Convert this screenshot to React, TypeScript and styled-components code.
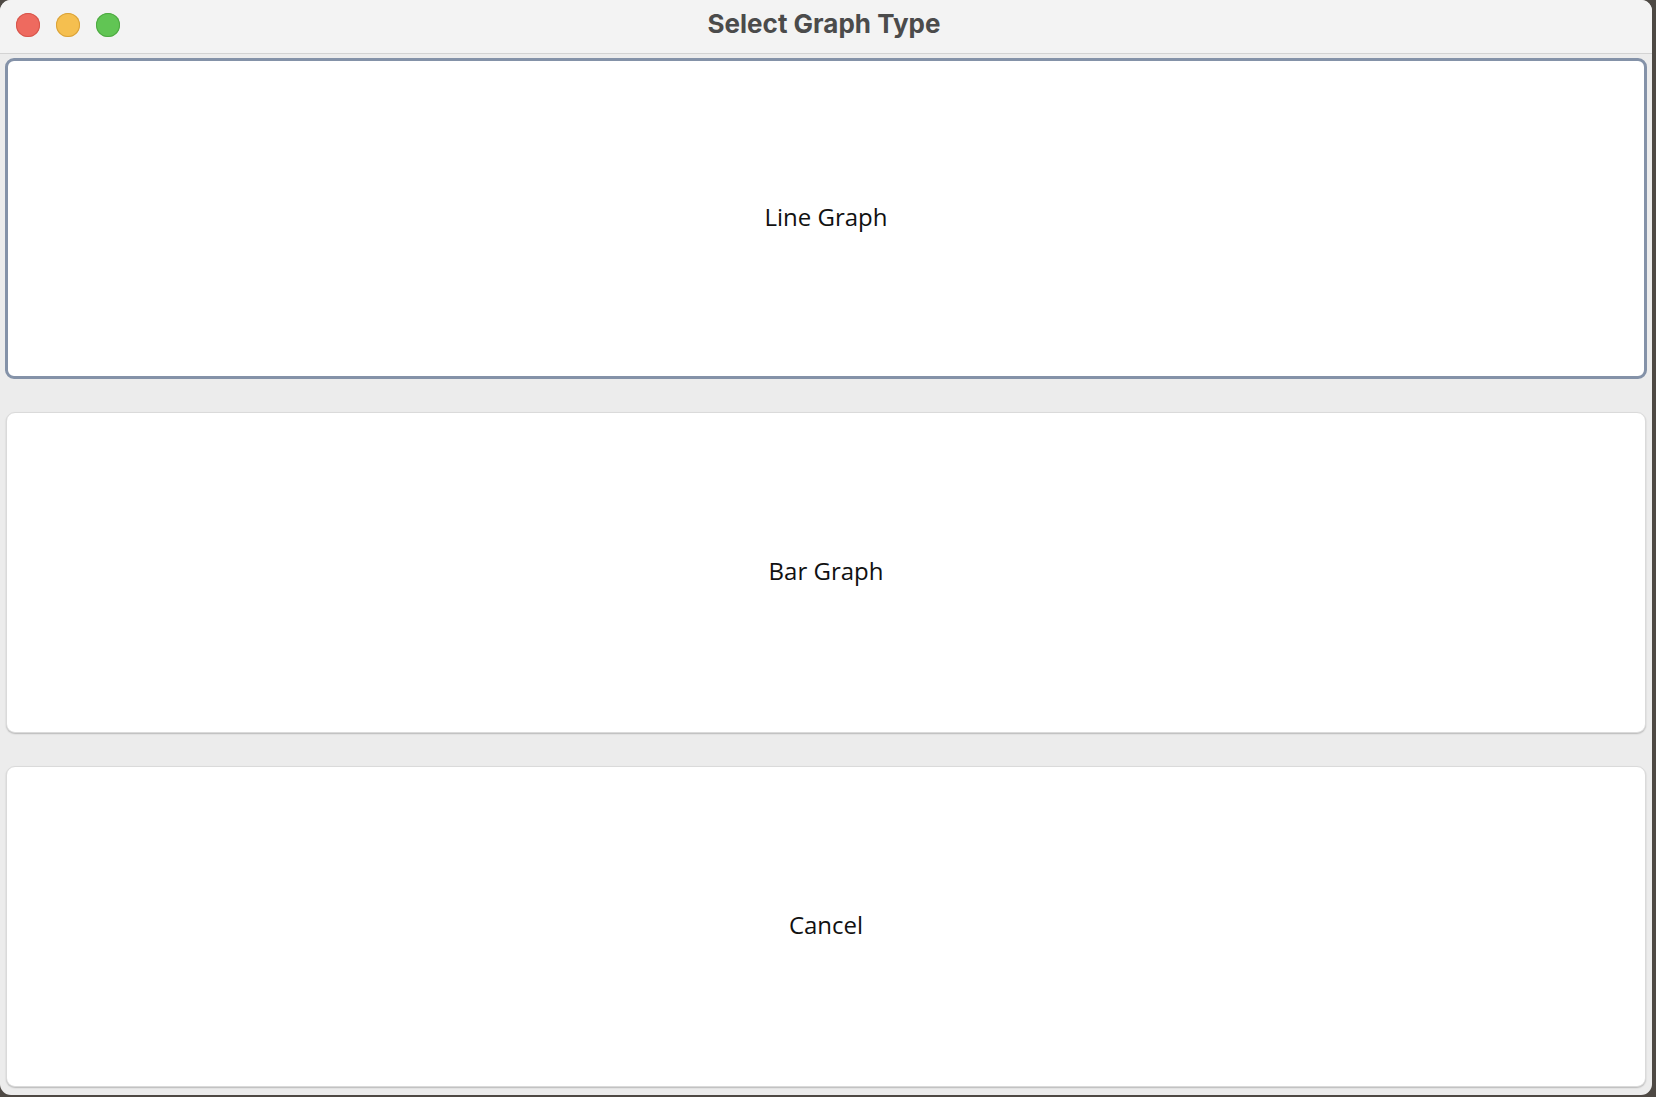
import React from "react";
import styled, { createGlobalStyle } from "styled-components";

const Global = createGlobalStyle`
  html, body { margin: 0; padding: 0; }
  body {
    width: 1656px;
    height: 1097px;
    overflow: hidden;
    background: #4e4944;
    font-family: "Open Sans", "DejaVu Sans", sans-serif;
  }
`;

const Window = styled.div`
  width: 1652px;
  height: 1095px;
  border-radius: 11px;
  overflow: hidden;
  background: #ececec;
  display: flex;
  flex-direction: column;
`;

const TitleBar = styled.div`
  height: 53px;
  flex: 0 0 53px;
  background: #f3f3f3;
  border-bottom: 1px solid #d3d3d3;
  display: flex;
  align-items: center;
  position: relative;
`;

const Lights = styled.div`
  display: flex;
  gap: 16px;
  padding-left: 16px;
  padding-bottom: 3px;
  align-items: center;
`;

const Light = styled.span<{ $fill: string; $edge: string }>`
  width: 24px;
  height: 24px;
  border-radius: 50%;
  background: ${(p) => p.$fill};
  box-shadow: inset 0 0 0 1px ${(p) => p.$edge};
`;

const Title = styled.div`
  position: absolute;
  left: 0;
  right: 0;
  top: 0;
  bottom: 0;
  display: flex;
  align-items: center;
  justify-content: center;
  font-family: Inter, "Liberation Sans", sans-serif;
  font-weight: 700;
  font-size: 26px;
  color: #4b4b4b;
  padding-bottom: 6px;
  padding-right: 4px;
  pointer-events: none;
`;

const Content = styled.div`
  flex: 1;
  display: flex;
  flex-direction: column;
  gap: 33px;
  padding: 4px 5px 8px 5px;
`;

const ChoiceButton = styled.button<{ $focused?: boolean }>`
  flex: none;
  box-sizing: border-box;
  height: 321px;
  background: #ffffff;
  border-radius: 9px;
  border: ${(p) => (p.$focused ? "3px solid #8492a8" : "1px solid #dadada")};
  box-shadow: ${(p) =>
    p.$focused ? "none" : "0 1px 1.5px rgba(0, 0, 0, 0.22)"};
  margin: ${(p) => (p.$focused ? "0" : "0 1px")};
  font-family: "Open Sans", "DejaVu Sans", sans-serif;
  font-size: 24px;
  color: #111111;
  cursor: pointer;
  display: flex;
  align-items: center;
  justify-content: center;
  padding: 0 0 5px 0;
  outline: none;
`;

export default function App() {
  return (
    <>
      <Global />
      <Window>
        <TitleBar>
          <Lights>
            <Light $fill="#ee6a5f" $edge="#d6564c" />
            <Light $fill="#f5bf4f" $edge="#d9a23a" />
            <Light $fill="#61c554" $edge="#4ea842" />
          </Lights>
          <Title>Select Graph Type</Title>
        </TitleBar>
        <Content>
          <ChoiceButton $focused>Line Graph</ChoiceButton>
          <ChoiceButton>Bar Graph</ChoiceButton>
          <ChoiceButton>Cancel</ChoiceButton>
        </Content>
      </Window>
    </>
  );
}
